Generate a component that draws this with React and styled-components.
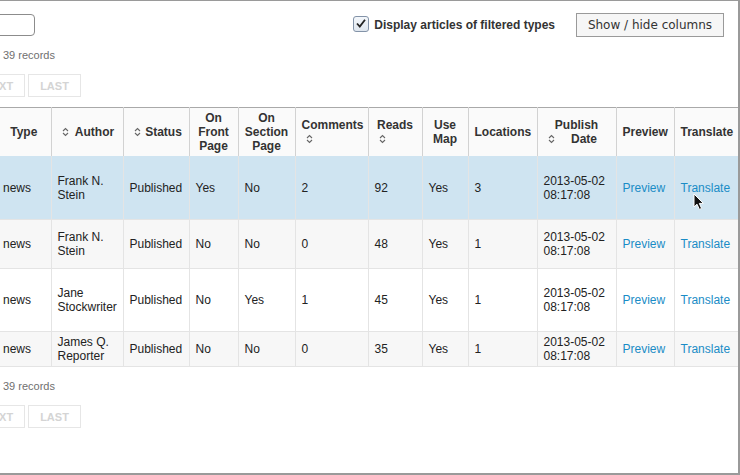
import styled, { createGlobalStyle } from "styled-components";

const GlobalStyle = createGlobalStyle`
  html, body {
    margin: 0;
    padding: 0;
    background: #fff;
  }
  body {
    font-family: "Liberation Sans", Arial, sans-serif;
  }
`;

const Panel = styled.div`
  position: relative;
  width: 740px;
  height: 475px;
  box-sizing: border-box;
  border-top: 1px solid #9a9a9a;
  border-right: 2px solid #9a9a9a;
  border-bottom: 2px solid #9a9a9a;
  overflow: hidden;
  background: #fff;
`;

const Toolbar = styled.div`
  display: flex;
  align-items: center;
  height: 25px;
  margin-top: 11px;
  padding-right: 14px;
`;

const SearchInput = styled.input`
  width: 140px;
  height: 22px;
  box-sizing: border-box;
  margin-left: -105px;
  border: 1px solid #8c8c8c;
  border-radius: 4px;
  background: #fff;
  outline: none;
`;

const Spacer = styled.div`
  flex: 1;
`;

const CheckLabel = styled.label`
  display: flex;
  align-items: center;
  gap: 5px;
  font-size: 12px;
  font-weight: bold;
  color: #333;
`;

const CheckBox = styled.span`
  display: inline-flex;
  align-items: center;
  justify-content: center;
  width: 16px;
  height: 16px;
  box-sizing: border-box;
  margin-top: -2px;
  border: 1px solid #8393a8;
  border-radius: 3px;
  background: linear-gradient(#f4f7fb, #dfe6ee);
`;

const ColumnsButton = styled.button`
  margin-left: 21px;
  width: 148px;
  height: 24px;
  border: 1px solid #9a9a9a;
  border-radius: 0;
  background: #f6f6f6;
  color: #333;
  font-family: "DejaVu Sans", sans-serif;
  font-size: 12px;
  padding: 0;
`;

const Info = styled.div`
  margin-top: ${(p) => p.$top}px;
  padding-left: 3px;
  font-size: 11px;
  line-height: 14px;
  color: #6f6f6f;
`;

const Pager = styled.div`
  display: flex;
  gap: 3px;
  margin-top: 12px;
  margin-left: -28px;
`;

const PageButton = styled.span`
  display: inline-flex;
  align-items: center;
  justify-content: center;
  width: 53px;
  height: 23px;
  box-sizing: border-box;
  border: 1px solid #e6e6e6;
  color: #d4d4d4;
  font-size: 11px;
  font-weight: bold;
`;

const Table = styled.table`
  margin-top: 10px;
  margin-left: -3px;
  width: 741px;
  table-layout: fixed;
  border-collapse: collapse;
  border-top: 1px solid #a9a9a9;
  border-bottom: 1px solid #9a9a9a;
  font-size: 12px;
  line-height: 14px;
`;

const Th = styled.th`
  height: 48px;
  padding: 0 6px;
  background: #fafafa;
  border-right: 1px solid #d2d2d2;
  color: #333;
  font-weight: bold;
  text-align: center;
  vertical-align: middle;
  &:last-child {
    border-right: none;
  }
`;

const SortIcon = styled.span`
  float: left;
  width: 15px;
  height: 14px;
  display: flex;
  align-items: center;
  padding-left: 4px;
  box-sizing: border-box;
`;

const Row = styled.tr`
  background: ${(p) => p.$bg};
`;

const Td = styled.td`
  height: ${(p) => p.$h}px;
  padding: 0 6px;
  border-right: 1px solid #e4e4e4;
  border-bottom: 1px solid #e4e4e4;
  color: #222;
  vertical-align: middle;
  &:last-child {
    border-right: none;
  }
`;

const Link = styled.a`
  color: #1a8cc6;
  text-decoration: none;
`;

const Cursor = styled.svg`
  position: absolute;
  left: 693px;
  top: 192px;
`;

const Sort = () => (
  <SortIcon>
    <svg width="7" height="10" viewBox="0 0 7 10">
      <path
        d="M1 4 L3.5 1.5 L6 4 M1 6 L3.5 8.5 L6 6"
        fill="none"
        stroke="#666"
        strokeWidth="1.1"
      />
    </svg>
  </SortIcon>
);

const COLS = [54, 72, 66, 49, 57, 73, 54, 46, 69, 79, 58, 64];

const HEADERS = [
  { label: "Type" },
  { label: "Author", sort: true },
  { label: "Status", sort: true },
  { label: "On Front Page" },
  { label: "On Section Page" },
  { label: "Comments", sort: true },
  { label: "Reads", sort: true },
  { label: "Use Map" },
  { label: "Locations" },
  { label: "Publish Date", sort: true },
  { label: "Preview" },
  { label: "Translate" },
];

const ROWS = [
  { h: 63, bg: "#cfe4f1", author: ["Frank N.", "Stein"], front: "Yes", section: "No", comments: 2, reads: 92, loc: 3 },
  { h: 48, bg: "#f7f7f7", author: ["Frank N.", "Stein"], front: "No", section: "No", comments: 0, reads: 48, loc: 1 },
  { h: 62, bg: "#ffffff", author: ["Jane", "Stockwriter"], front: "No", section: "Yes", comments: 1, reads: 45, loc: 1 },
  { h: 34, bg: "#f7f7f7", author: ["James Q.", "Reporter"], front: "No", section: "No", comments: 0, reads: 35, loc: 1 },
];

const Paging = ({ top }) => (
  <>
    <Info $top={top}>39 records</Info>
    <Pager>
      <PageButton>NEXT</PageButton>
      <PageButton>LAST</PageButton>
    </Pager>
  </>
);

const App = () => {
  return (
    <Panel>
      <GlobalStyle />
      <Toolbar>
        <SearchInput type="text" />
        <Spacer />
        <CheckLabel>
          <CheckBox>
            <svg width="12" height="11" viewBox="0 0 12 11">
              <path
                d="M2 5.5 L4.8 8.5 L10 1.8"
                fill="none"
                stroke="#222"
                strokeWidth="1.8"
              />
            </svg>
          </CheckBox>
          Display articles of filtered types
        </CheckLabel>
        <ColumnsButton>Show / hide columns</ColumnsButton>
      </Toolbar>

      <Paging top={11} />

      <Table>
        <colgroup>
          {COLS.map((w, i) => (
            <col key={i} style={{ width: w }} />
          ))}
        </colgroup>
        <thead>
          <tr>
            {HEADERS.map((h) => (
              <Th key={h.label}>
                {h.label}
                {h.sort && <Sort />}
              </Th>
            ))}
          </tr>
        </thead>
        <tbody>
          {ROWS.map((r, i) => (
            <Row key={i} $bg={r.bg}>
              <Td $h={r.h}>news</Td>
              <Td $h={r.h}>
                {r.author[0]}
                <br />
                {r.author[1]}
              </Td>
              <Td $h={r.h}>Published</Td>
              <Td $h={r.h}>{r.front}</Td>
              <Td $h={r.h}>{r.section}</Td>
              <Td $h={r.h}>{r.comments}</Td>
              <Td $h={r.h}>{r.reads}</Td>
              <Td $h={r.h}>Yes</Td>
              <Td $h={r.h}>{r.loc}</Td>
              <Td $h={r.h}>
                2013-05-02
                <br />
                08:17:08
              </Td>
              <Td $h={r.h}>
                <Link href="#">Preview</Link>
              </Td>
              <Td $h={r.h}>
                <Link href="#">Translate</Link>
              </Td>
            </Row>
          ))}
        </tbody>
      </Table>

      <Paging top={12} />

      <Cursor width="13" height="19" viewBox="0 0 13 19">
        <path
          d="M1 1 L1 14 L4 11.2 L6.4 16.4 L8.6 15.4 L6.3 10.4 L10.4 10.4 Z"
          fill="#111"
          stroke="#fff"
          strokeWidth="1"
        />
      </Cursor>
    </Panel>
  );
};

export default App;
